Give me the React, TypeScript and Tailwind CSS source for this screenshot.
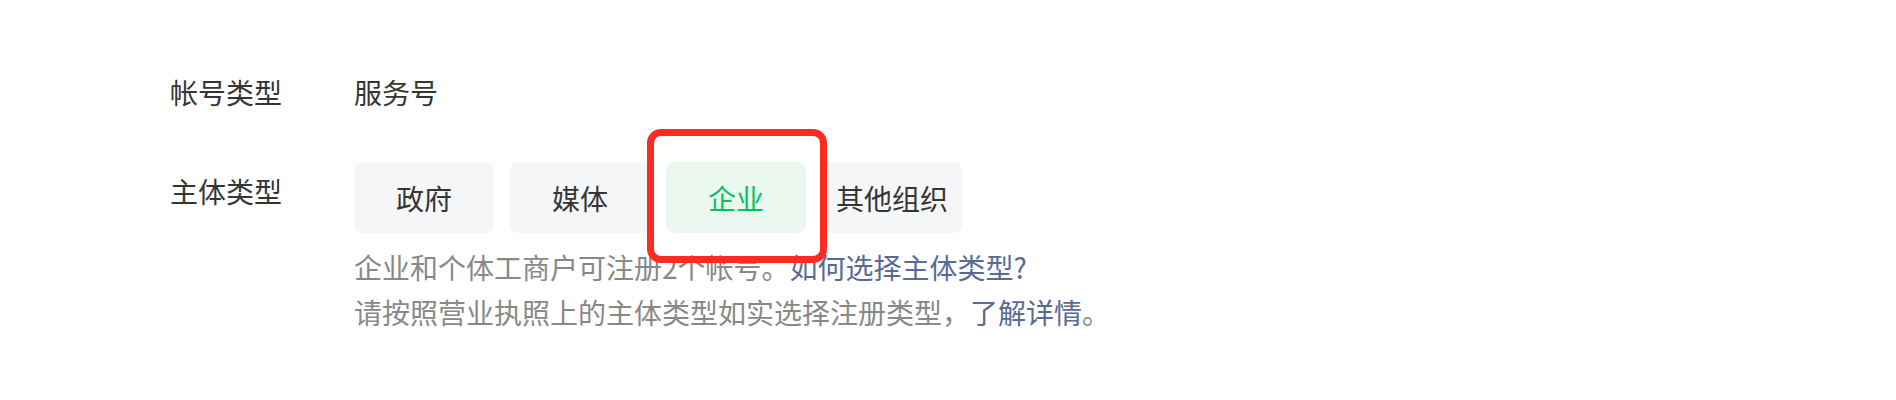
import React, { useState } from "react";

const subjectTypes = ["政府", "媒体", "企业", "其他组织"];

const App = () => {
  const [selected, setSelected] = useState("企业");

  return (
    <div
      className="w-[1896px] h-[400px] bg-white pl-[170px] pt-[72px] text-[#353535]"
      style={{ fontFamily: '"Noto Sans CJK SC", "Noto Sans", sans-serif' }}
    >
      <div className="flex">
        <div className="w-[184px] text-[28px] leading-[40px]">帐号类型</div>
        <div className="text-[28px] leading-[40px]">服务号</div>
      </div>

      <div className="flex mt-[50px]">
        <div className="w-[184px] pt-[9px] text-[28px] leading-[40px]">主体类型</div>
        <div>
          <div className="flex gap-[16px]">
            {subjectTypes.map((type) => {
              const active = type === selected;
              return (
                <div key={type} className="relative">
                  <button
                    onClick={() => setSelected(type)}
                    className={
                      active
                        ? "w-[140px] h-[71px] rounded-[8px] bg-[#eaf8f0] text-[#07c160] text-[28px] flex items-center justify-center"
                        : "w-[140px] h-[71px] rounded-[8px] bg-[#f5f6f8] text-[#353535] text-[28px] flex items-center justify-center"
                    }
                  >
                    {type}
                  </button>
                  {active && (
                    <div className="absolute -left-[19px] -top-[33px] w-[180px] h-[134px] border-[7px] border-[#ff2a20] rounded-[14px] z-10 pointer-events-none" />
                  )}
                </div>
              );
            })}
          </div>
          <div className="mt-[12px] text-[28px] leading-[45px] text-[#888888]">
            <p>
              企业和个体工商户可注册2个帐号。
              <a className="text-[#576b95]">如何选择主体类型?</a>
            </p>
            <p>
              请按照营业执照上的主体类型如实选择注册类型，
              <a className="text-[#576b95]">了解详情</a>。
            </p>
          </div>
        </div>
      </div>
    </div>
  );
};

export default App;
